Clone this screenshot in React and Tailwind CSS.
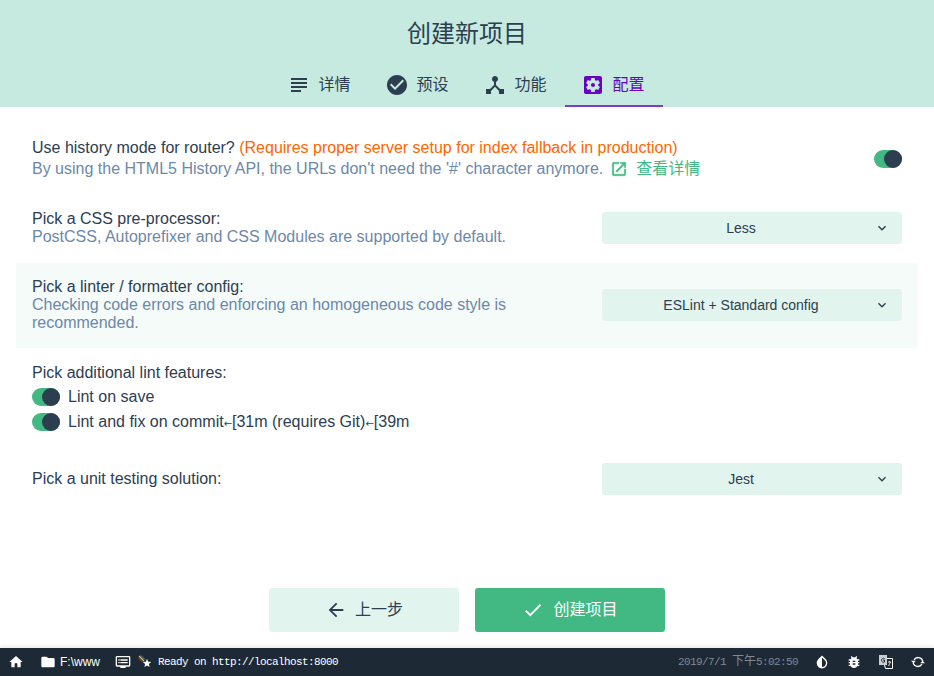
const SANS = "font-['Liberation_Sans','Noto_Sans_CJK_SC',sans-serif]";

const Icon = ({ d, className }) => (
  <svg viewBox="0 0 24 24" className={className} fill="currentColor">
    <path d={d} />
  </svg>
);

const icons = {
  subject: 'M14 17H4v2h10v-2zm6-8H4v2h16V9zM4 15h16v-2H4v2zM4 5v2h16V5H4z',
  check_circle: 'M12 2C6.48 2 2 6.48 2 12s4.48 10 10 10 10-4.48 10-10S17.52 2 12 2zm-2 15l-5-5 1.41-1.41L10 14.17l7.59-7.59L19 8l-9 9z',
  device_hub: 'M17 16l-4-4V8.82C14.16 8.4 15 7.3 15 6c0-1.66-1.34-3-3-3S9 4.34 9 6c0 1.3.84 2.4 2 2.82V12l-4 4H3v5h5v-3.05l4-4.2 4 4.2V21h5v-5h-4z',
  settings: 'M12 10c-1.1 0-2 .9-2 2s.9 2 2 2 2-.9 2-2-.9-2-2-2zm7-7H5c-1.11 0-2 .9-2 2v14c0 1.1.89 2 2 2h14c1.11 0 2-.9 2-2V5c0-1.1-.89-2-2-2zm-1.75 9c0 .23-.02.46-.05.68l1.48 1.16c.13.11.17.3.08.45l-1.4 2.42c-.09.15-.27.21-.43.15l-1.74-.7c-.36.28-.76.51-1.18.69l-.26 1.85c-.03.17-.18.3-.35.3h-2.8c-.17 0-.32-.13-.35-.29l-.26-1.85c-.43-.18-.82-.41-1.18-.69l-1.74.7c-.16.06-.34 0-.43-.15l-1.4-2.42c-.09-.15-.05-.34.08-.45l1.48-1.16c-.03-.23-.05-.46-.05-.69 0-.23.02-.46.05-.68l-1.48-1.16c-.13-.11-.17-.3-.08-.45l1.4-2.42c.09-.15.27-.21.43-.15l1.74.7c.36-.28.76-.51 1.18-.69l.26-1.85c.03-.17.18-.3.35-.3h2.8c.17 0 .32.13.35.29l.26 1.85c.43.18.82.41 1.18.69l1.74-.7c.16-.06.34 0 .43.15l1.4 2.42c.09.15.05.34-.08.45l-1.48 1.16c.03.23.05.46.05.69z',
  open_in_new: 'M19 19H5V5h7V3H5c-1.11 0-2 .9-2 2v14c0 1.1.89 2 2 2h14c1.1 0 2-.9 2-2v-7h-2v7zM14 3v2h3.59l-9.83 9.83 1.41 1.41L19 6.41V10h2V3h-7z',
  arrow_back: 'M20 11H7.83l5.59-5.59L12 4l-8 8 8 8 1.41-1.41L7.83 13H20v-2z',
  check: 'M9 16.17L4.83 12l-1.42 1.41L9 19 21 7l-1.41-1.41z',
  expand: 'M16.59 8.59L12 13.17 7.41 8.59 6 10l6 6 6-6z',
  home: 'M10 20v-6h4v6h5v-8h3L12 3 2 12h3v8z',
  folder: 'M10 4H4c-1.1 0-1.99.9-1.99 2L2 18c0 1.1.9 2 2 2h16c1.1 0 2-.9 2-2V8c0-1.1-.9-2-2-2h-8l-2-2z',
  dvr: 'M21 3H3c-1.1 0-2 .9-2 2v12c0 1.1.9 2 2 2h5v2h8v-2h5c1.1 0 1.99-.9 1.99-2L23 5c0-1.1-.9-2-2-2zm0 14H3V5h18v12zm-2-9H8v2h11V8zm0 4H8v2h11v-2zM7 8H5v2h2V8zm0 4H5v2h2v-2z',
  invert: 'M17.66 7.93L12 2.27 6.34 7.93c-3.12 3.12-3.12 8.19 0 11.31C7.9 20.8 9.95 21.58 12 21.58c2.05 0 4.1-.78 5.66-2.34 3.12-3.12 3.12-8.19 0-11.31zM12 19.59c-1.6 0-3.11-.62-4.24-1.76C6.62 16.69 6 15.19 6 13.59s.62-3.11 1.76-4.24L12 5.1v14.49z',
  bug: 'M20 8h-2.81c-.45-.78-1.07-1.45-1.82-1.96L17 4.41 15.59 3l-2.17 2.17C12.96 5.06 12.49 5 12 5c-.49 0-.96.06-1.41.17L8.41 3 7 4.41l1.62 1.63C7.88 6.55 7.26 7.22 6.81 8H4v2h2.09c-.05.33-.09.66-.09 1v1H4v2h2v1c0 .34.04.67.09 1H4v2h2.81c1.04 1.79 2.97 3 5.19 3s4.15-1.21 5.19-3H20v-2h-2.09c.05-.33.09-.66.09-1v-1h2v-2h-2v-1c0-.34-.04-.67-.09-1H20V8zm-6 8h-4v-2h4v2zm0-4h-4v-2h4v2z',
};

const tabs = [
  { label: '详情', icon: 'subject' },
  { label: '预设', icon: 'check_circle' },
  { label: '功能', icon: 'device_hub' },
  { label: '配置', icon: 'settings', active: true },
];

const Toggle = ({ className = '' }) => (
  <div className={`relative h-[18px] w-7 shrink-0 rounded-full bg-[#42b983] ${className}`}>
    <div className="absolute right-0 top-0 h-[18px] w-[18px] rounded-full bg-[#2c3e50]" />
  </div>
);

const Select = ({ value }) => (
  <div className="relative flex h-8 w-[300px] shrink-0 items-center justify-center rounded-[3px] bg-[#e2f4ee] pr-[22px] text-sm text-[#2c3e50]">
    {value}
    <Icon d={icons.expand} className="absolute right-[12px] top-[8px] h-4 w-4" />
  </div>
);

const Arrow = () => <span className="font-['DejaVu_Sans',sans-serif] text-[10px]">←</span>;

const Header = () => (
  <header className="flex h-[107px] shrink-0 flex-col items-center bg-[#c6eadf] text-[#2c3e50]">
    <h1 className="mt-[19px] h-[30px] text-2xl leading-[30px]">创建新项目</h1>
    <nav className="mt-[13px] flex">
      {tabs.map((tab) => (
        <div
          key={tab.label}
          className={`flex h-[45px] w-[98px] items-center justify-center gap-[7px] border-b-2 pr-[2px] pt-[3px] ${tab.active ? 'border-[#8439c8] text-[#6a00c4]' : 'border-transparent'}`}
        >
          <Icon d={icons[tab.icon]} className="h-6 w-6" />
          <span className="text-base">{tab.label}</span>
        </div>
      ))}
    </nav>
  </header>
);

const Form = () => (
  <main className="flex-1 px-4 text-base text-[#2c3e50]">
    <section className="mt-[30px] flex items-center justify-between px-4">
      <div className="leading-[21px]">
        <div>
          Use history mode for router? <span className="text-[#ff6600]">(Requires proper server setup for index fallback in production)</span>
        </div>
        <div className="flex items-center text-[#6d88a8]">
          By using the HTML5 History API, the URLs don't need the '#' character anymore.
          <Icon d={icons.open_in_new} className="ml-[7px] h-[18px] w-[18px] stroke-current stroke-[0.6] text-[#42b983]" />
          <span className="ml-[8px] text-[#42b983]">查看详情</span>
        </div>
      </div>
      <Toggle className="mt-[1px]" />
    </section>

    <section className="mt-[31px] flex items-center justify-between px-4">
      <div className="w-[520px] leading-[18px]">
        <div>Pick a CSS pre-processor:</div>
        <div className="text-[#6d88a8]">PostCSS, Autoprefixer and CSS Modules are supported by default.</div>
      </div>
      <Select value="Less" />
    </section>

    <section className="mt-[17px] flex h-[85px] items-center justify-between bg-[#f4fbf9] px-4 pb-[1px]">
      <div className="w-[520px] leading-[18px]">
        <div>Pick a linter / formatter config:</div>
        <div className="text-[#6d88a8]">Checking code errors and enforcing an homogeneous code style is recommended.</div>
      </div>
      <Select value="ESLint + Standard config" />
    </section>

    <section className="mt-[16px] px-4">
      <div className="leading-[18px]">Pick additional lint features:</div>
      <div className="mt-[2px] flex h-[25px] items-center gap-2">
        <Toggle />
        <span>Lint on save</span>
      </div>
      <div className="flex h-[25px] items-center gap-2">
        <Toggle />
        <span>
          Lint and fix on commit<Arrow />[31m (requires Git)<Arrow />[39m
        </span>
      </div>
    </section>

    <section className="mt-[29px] flex items-center justify-between px-4">
      <div>Pick a unit testing solution:</div>
      <Select value="Jest" />
    </section>
  </main>
);

const Actions = () => (
  <div className="flex shrink-0 justify-center gap-4 pb-4">
    <button className="flex h-11 w-[190px] items-center justify-center gap-[8px] rounded-[3px] bg-[#e2f4ee] text-[#2c3e50]">
      <Icon d={icons.arrow_back} className="h-[22px] w-[22px]" />
      <span className="text-base">上一步</span>
    </button>
    <button className="flex h-11 w-[190px] items-center justify-center gap-[9px] rounded-[3px] bg-[#42b983] text-white">
      <Icon d={icons.check} className="h-[22px] w-[22px]" />
      <span className="text-base">创建项目</span>
    </button>
  </div>
);

const StatusBar = () => (
  <footer className="z-10 flex h-7 shrink-0 items-center bg-[#1d2935] text-white shadow-[0_-2px_4px_rgba(0,0,0,0.08)]">
    <Icon d={icons.home} className="ml-[8px] h-4 w-4" />
    <Icon d={icons.folder} className="ml-[16px] h-4 w-4" />
    <span className="ml-[4px] text-xs">F:\www</span>
    <Icon d={icons.dvr} className="ml-[15px] h-4 w-4" />
    {/* shooting star from the terminal output */}
    <svg viewBox="0 0 14 14" className="ml-[7px] h-[14px] w-[14px]">
      <path d="M1 1l5 5" stroke="#e8c53a" strokeWidth="1.2" />
      <path d="M3 0.5l4 4" stroke="#4f8fe6" strokeWidth="1" />
      <path d="M0.5 3l4 4" stroke="#d9534f" strokeWidth="0.8" />
      <path d="M9 4l1.2 2.8 3 .3-2.3 2 .7 3-2.6-1.6-2.6 1.6.7-3-2.3-2 3-.3z" fill="#fff" />
    </svg>
    <span className="ml-[6px] font-['Liberation_Mono',monospace] text-[11px] tracking-[-0.6px]">Ready on http://localhost:8000</span>
    <span className="ml-auto font-['Liberation_Mono','Noto_Sans_CJK_SC',monospace] text-[11px] tracking-[-0.6px] text-[#808a93]">
      2019/7/1 <span className="text-xs tracking-normal">下午</span>5:02:50
    </span>
    <Icon d={icons.invert} className="ml-[16px] h-4 w-4 -scale-x-100" />
    <Icon d={icons.bug} className="ml-[16px] h-4 w-4" />
    <svg viewBox="0 0 16 16" className="ml-[16px] h-4 w-4">
      <rect x="1" y="1" width="8" height="10" fill="#c9ced2" />
      <path d="M9 4.5h5.5v10h-7l-1-3.5" fill="none" stroke="#fff" />
      <path d="M10 8h3M11.5 7v1M10.5 12l2-4" fill="none" stroke="#fff" strokeWidth="0.8" />
      <path d="M6.5 4.5a2 2 0 1 0 0 3.5V6H5" fill="none" stroke="#1d2935" />
    </svg>
    <svg viewBox="0 0 16 16" className="ml-[17px] mr-[9px] h-[14px] w-[14px]" fill="none" stroke="#fff" strokeWidth="1.5">
      <path d="M2.5 9a5.5 5.5 0 0 0 10 1.5" />
      <path d="M13.5 7a5.5 5.5 0 0 0-10-1.5" />
      <path d="M0 6.5h5.5L2.8 9.5z" fill="#fff" stroke="none" />
      <path d="M16 9.5h-5.5l2.7-3z" fill="#fff" stroke="none" />
    </svg>
  </footer>
);

export default function App() {
  return (
    <div className={`flex h-[676px] w-[934px] flex-col overflow-hidden bg-white ${SANS}`}>
      <Header />
      <Form />
      <Actions />
      <StatusBar />
    </div>
  );
}
